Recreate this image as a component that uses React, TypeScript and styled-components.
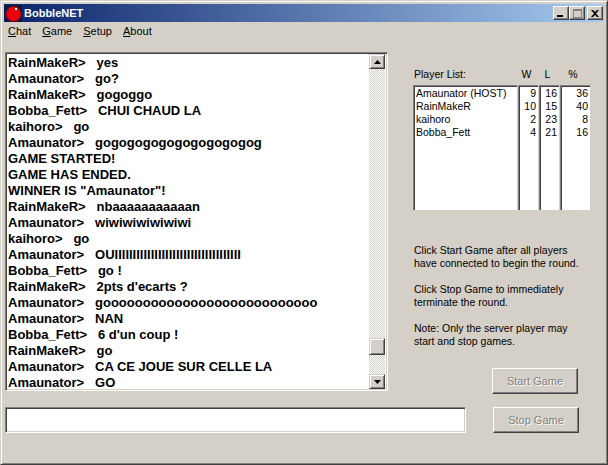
import styled, { createGlobalStyle } from "styled-components";

const GlobalStyle = createGlobalStyle`
  html, body {
    margin: 0;
    padding: 0;
    background: #d4d0c8;
  }
  * {
    box-sizing: border-box;
  }
`;

const Window = styled.div`
  width: 608px;
  height: 465px;
  display: flex;
  flex-direction: column;
  padding: 3px 4px 4px;
  background: #d4d0c8;
  border-top: 1px solid #d4d0c8;
  border-left: 1px solid #d4d0c8;
  border-right: 1px solid #404040;
  border-bottom: 1px solid #404040;
  box-shadow: inset 1px 1px 0 #ffffff, inset -1px -1px 0 #808080;
  font-family: "Liberation Sans", Arial, sans-serif;
  font-size: 10.5px;
  color: #000;
  overflow: hidden;
`;

const TitleBar = styled.div`
  height: 18px;
  margin: 0 -1px;
  flex-shrink: 0;
  display: flex;
  align-items: center;
  padding: 0 1px;
  background: linear-gradient(90deg, #0a246a, #a6caf0);
`;

const TitleText = styled.span`
  margin-left: 2px;
  flex: 1;
  color: #fff;
  font-weight: 700;
  font-size: 11px;
`;

const CaptionButton = styled.div<{ $gap?: number }>`
  width: 16px;
  height: 14px;
  margin-left: ${(props) => props.$gap ?? 0}px;
  display: flex;
  align-items: center;
  justify-content: center;
  background: #d4d0c8;
  border-top: 1px solid #fff;
  border-left: 1px solid #fff;
  border-right: 1px solid #404040;
  border-bottom: 1px solid #404040;
  box-shadow: inset -1px -1px 0 #808080;
`;

const MenuBar = styled.div`
  height: 18px;
  flex-shrink: 0;
  display: flex;
  align-items: center;
  padding-left: 3px;
  gap: 11px;
  font-size: 11px;
`;

const MenuItem = styled.span`
  u {
    text-underline-offset: 1px;
  }
`;

const Body = styled.div`
  flex: 1;
  display: flex;
  flex-direction: column;
  padding-top: 12px;
`;

const TopRow = styled.div`
  height: 342px;
  display: flex;
`;

const ChatBox = styled.div`
  width: 383px;
  height: 339px;
  flex-shrink: 0;
  display: flex;
  background: #fff;
  border-top: 1px solid #808080;
  border-left: 1px solid #808080;
  border-right: 1px solid #fff;
  border-bottom: 1px solid #fff;
  box-shadow: inset 1px 1px 0 #404040, inset -1px -1px 0 #d4d0c8;
  padding: 1px 2px 0;
`;

const ChatLines = styled.div`
  flex: 1;
  padding-top: 1px;
  display: flex;
  flex-direction: column;
`;

const ChatLine = styled.div`
  height: 16px;
  line-height: 16px;
  flex-shrink: 0;
  font-weight: 700;
  font-size: 13px;
  white-space: pre;
`;

const Scrollbar = styled.div`
  width: 16px;
  margin-bottom: 1px;
  display: flex;
  flex-direction: column;
  background: repeating-conic-gradient(#d4d0c8 0 25%, #fff 0 50%) 0 0 / 2px 2px;
`;

const ScrollTrack = styled.div`
  flex: 1;
  display: flex;
  flex-direction: column;
  justify-content: flex-end;
  padding-bottom: 19px;
`;

const ScrollButton = styled.div<{ $thumb?: boolean }>`
  width: 16px;
  height: ${(props) => (props.$thumb ? 17 : 15)}px;
  flex-shrink: 0;
  display: flex;
  align-items: center;
  justify-content: center;
  background: #d4d0c8;
  border-top: 1px solid #d4d0c8;
  border-left: 1px solid #d4d0c8;
  border-right: 1px solid #404040;
  border-bottom: 1px solid #404040;
  box-shadow: inset 1px 1px 0 #fff, inset -1px -1px 0 #808080;
`;

const Side = styled.div`
  flex: 1;
  display: flex;
  flex-direction: column;
  padding-left: 25px;
`;

const ListHeader = styled.div`
  height: 33px;
  display: grid;
  grid-template-columns: 105px 21px 21px 30px;
  align-items: end;
  padding-bottom: 4px;
  line-height: 13px;
`;

const HeaderCell = styled.span<{ $center?: boolean }>`
  text-align: ${(props) => (props.$center ? "center" : "left")};
  padding-left: ${(props) => (props.$center ? 0 : 1)}px;
  padding-right: ${(props) => (props.$center ? 4 : 0)}px;
`;

const Columns = styled.div`
  height: 125px;
  display: grid;
  grid-template-columns: 105px 21px 21px 30px;
`;

const ListColumn = styled.div<{ $right?: boolean }>`
  background: #fff;
  margin-right: 1px;
  padding: 1px 2px 0 2px;
  border-top: 1px solid #808080;
  border-left: 1px solid #808080;
  box-shadow: inset 1px 1px 0 #404040;
  text-align: ${(props) => (props.$right ? "right" : "left")};
  &:last-child {
    margin-right: 0;
  }
`;

const ListRow = styled.div`
  height: 13px;
  line-height: 13px;
  white-space: pre;
`;

const HelpText = styled.div`
  margin-top: 34px;
  display: flex;
  flex-direction: column;
  gap: 13px;
  line-height: 13px;
  padding-left: 1px;
`;

const StartSlot = styled.div`
  margin-top: auto;
  padding-left: 79px;
`;

const GameButton = styled.button`
  display: block;
  width: 86px;
  height: 26px;
  padding: 0;
  font-family: "Liberation Sans", Arial, sans-serif;
  font-size: 11px;
  color: #808080;
  text-shadow: 1px 1px 0 #fff;
  background: #d4d0c8;
  border-top: 1px solid #fff;
  border-left: 1px solid #fff;
  border-right: 1px solid #404040;
  border-bottom: 1px solid #404040;
  box-shadow: inset -1px -1px 0 #808080;
`;

const BottomRow = styled.div`
  margin-top: 13px;
  display: flex;
  gap: 27px;
`;

const ChatInput = styled.input`
  width: 461px;
  height: 26px;
  padding: 2px;
  background: #fff;
  border-top: 1px solid #808080;
  border-left: 1px solid #808080;
  border-right: 1px solid #fff;
  border-bottom: 1px solid #fff;
  box-shadow: inset 1px 1px 0 #404040, inset -1px -1px 0 #d4d0c8;
  outline: none;
`;

const chatLog = [
  "RainMakeR>   yes",
  "Amaunator>   go?",
  "RainMakeR>   gogoggo",
  "Bobba_Fett>   CHUI CHAUD LA",
  "kaihoro>   go",
  "Amaunator>   gogogogogogogogogogog",
  "GAME STARTED!",
  "GAME HAS ENDED.",
  'WINNER IS "Amaunator"!',
  "RainMakeR>   nbaaaaaaaaaaan",
  "Amaunator>   wiwiwiwiwiwiwi",
  "kaihoro>   go",
  "Amaunator>   OUIIIIIIIIIIIIIIIIIIIIIIIIIIIIIIIIIII",
  "Bobba_Fett>   go !",
  "RainMakeR>   2pts d'ecarts ?",
  "Amaunator>   gooooooooooooooooooooooooooo",
  "Amaunator>   NAN",
  "Bobba_Fett>   6 d'un coup !",
  "RainMakeR>   go",
  "Amaunator>   CA CE JOUE SUR CELLE LA",
  "Amaunator>   GO",
];

const players = [
  { name: "Amaunator (HOST)", wins: 9, losses: 16, pct: 36 },
  { name: "RainMakeR", wins: 10, losses: 15, pct: 40 },
  { name: "kaihoro", wins: 2, losses: 23, pct: 8 },
  { name: "Bobba_Fett", wins: 4, losses: 21, pct: 16 },
];

const menus = [
  { key: "C", rest: "hat" },
  { key: "G", rest: "ame" },
  { key: "S", rest: "etup" },
  { key: "A", rest: "bout" },
];

function App() {
  return (
    <>
      <GlobalStyle />
      <Window>
        <TitleBar>
          <svg width="17" height="17" viewBox="0 0 17 17">
            <rect width="17" height="17" fill="#10183c" />
            <circle cx="8.500" cy="9" r="7.500" fill="#e8000c" />
            <path d="M2 12a7.500 7.500 0 0 0 13 0 8 8 0 0 1-13 0z" fill="#900008" />
            <rect x="10" y="3" width="2" height="2" fill="#fff" />
          </svg>
          <TitleText>BobbleNET</TitleText>
          <CaptionButton>
            <svg width="8" height="8" viewBox="0 0 8 8">
              <rect x="0" y="6" width="6" height="2" fill="#000" />
            </svg>
          </CaptionButton>
          <CaptionButton>
            <svg width="9" height="9" viewBox="0 0 9 9">
              <rect x="0.5" y="0.5" width="8" height="8" fill="none" stroke="#808080" />
              <rect x="0" y="0" width="9" height="2" fill="#808080" />
            </svg>
          </CaptionButton>
          <CaptionButton $gap={2}>
            <svg width="8" height="7" viewBox="0 0 8 7">
              <path d="M0 0h2l2 2 2-2h2L5 3.500 8 7H6L4 5 2 7H0l3-3.500z" fill="#000" />
            </svg>
          </CaptionButton>
        </TitleBar>
        <MenuBar>
          {menus.map((menu) => (
            <MenuItem key={menu.key}>
              <u>{menu.key}</u>
              {menu.rest}
            </MenuItem>
          ))}
        </MenuBar>
        <Body>
          <TopRow>
            <ChatBox>
              <ChatLines>
                {chatLog.map((line, i) => (
                  <ChatLine key={i}>{line}</ChatLine>
                ))}
              </ChatLines>
              <Scrollbar>
                <ScrollButton>
                  <svg width="7" height="4" viewBox="0 0 7 4">
                    <path d="M3.500 0L7 4H0z" fill="#000" />
                  </svg>
                </ScrollButton>
                <ScrollTrack>
                  <ScrollButton $thumb />
                </ScrollTrack>
                <ScrollButton>
                  <svg width="7" height="4" viewBox="0 0 7 4">
                    <path d="M0 0h7L3.500 4z" fill="#000" />
                  </svg>
                </ScrollButton>
              </Scrollbar>
            </ChatBox>
            <Side>
              <ListHeader>
                <HeaderCell>Player List:</HeaderCell>
                <HeaderCell $center>W</HeaderCell>
                <HeaderCell $center>L</HeaderCell>
                <HeaderCell $center>%</HeaderCell>
              </ListHeader>
              <Columns>
                <ListColumn>
                  {players.map((p) => (
                    <ListRow key={p.name}>{p.name}</ListRow>
                  ))}
                </ListColumn>
                <ListColumn $right>
                  {players.map((p) => (
                    <ListRow key={p.name}>{p.wins}</ListRow>
                  ))}
                </ListColumn>
                <ListColumn $right>
                  {players.map((p) => (
                    <ListRow key={p.name}>{p.losses}</ListRow>
                  ))}
                </ListColumn>
                <ListColumn $right>
                  {players.map((p) => (
                    <ListRow key={p.name}>{p.pct}</ListRow>
                  ))}
                </ListColumn>
              </Columns>
              <HelpText>
                <div>
                  Click Start Game after all players
                  <br />
                  have connected to begin the round.
                </div>
                <div>
                  Click Stop Game to immediately
                  <br />
                  terminate the round.
                </div>
                <div>
                  Note: Only the server player may
                  <br />
                  start and stop games.
                </div>
              </HelpText>
              <StartSlot>
                <GameButton disabled>Start Game</GameButton>
              </StartSlot>
            </Side>
          </TopRow>
          <BottomRow>
            <ChatInput />
            <GameButton disabled>Stop Game</GameButton>
          </BottomRow>
        </Body>
      </Window>
    </>
  );
}

export default App;
